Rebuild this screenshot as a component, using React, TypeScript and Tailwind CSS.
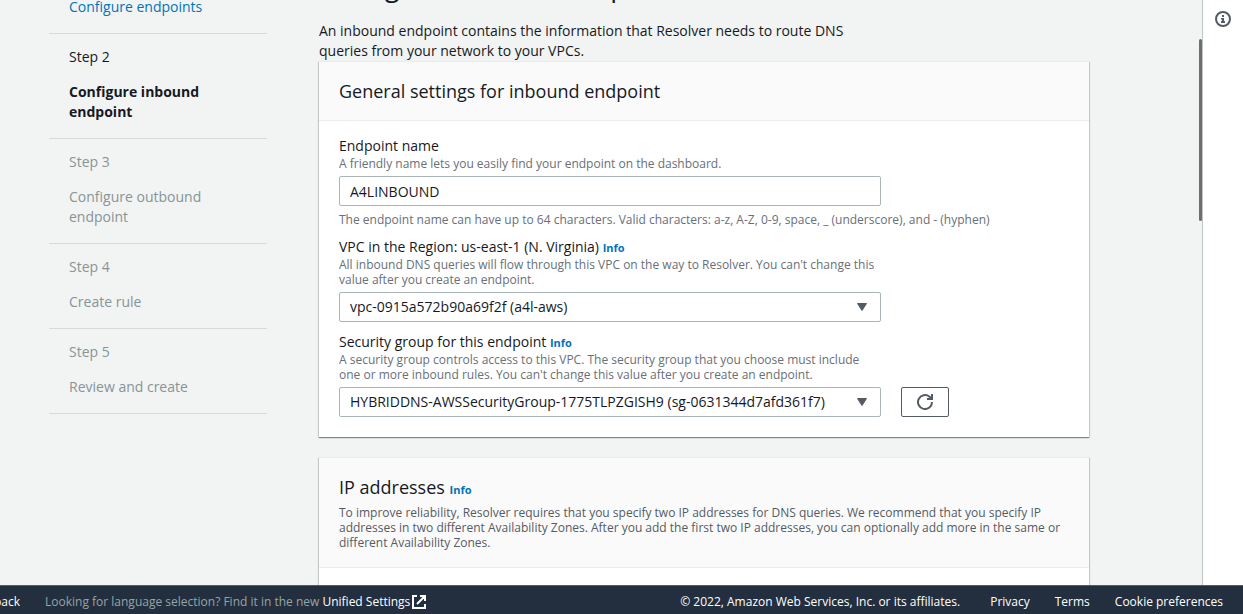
import type { ReactNode } from "react";

const steps = [
  { label: "Step 1", title: "Configure endpoints", state: "done" },
  { label: "Step 2", title: "Configure inbound endpoint", state: "current" },
  { label: "Step 3", title: "Configure outbound endpoint", state: "todo" },
  { label: "Step 4", title: "Create rule", state: "todo" },
  { label: "Step 5", title: "Review and create", state: "todo" },
];

function InfoLink() {
  return (
    <a href="#info" className="text-[11px] leading-none font-bold text-[#0073bb]">
      Info
    </a>
  );
}

function StepList() {
  return (
    <nav aria-label="Steps" className="-mt-[51px] w-[218px] shrink-0">
      <ol>
        {steps.map((s) => (
          <li
            key={s.label}
            className={`border-b border-[#d5dbdb] px-5 pt-[13px] pb-4 leading-5 ${
              s.state === "todo" ? "text-[#879596]" : "text-[#16191f]"
            }`}
          >
            <div className="mb-[15px]">{s.label}</div>
            {s.state === "done" ? (
              <a href="#step" className="text-[#0073bb]">
                {s.title}
              </a>
            ) : (
              <div className={s.state === "current" ? "font-bold" : ""}>{s.title}</div>
            )}
          </li>
        ))}
      </ol>
    </nav>
  );
}

function Card({ header, children }: { header: ReactNode; children?: ReactNode }) {
  return (
    <section className="border-t border-[#eaeded] bg-white shadow-[0_1px_1px_0_rgba(0,28,36,0.3),1px_1px_1px_0_rgba(0,28,36,0.15),-1px_1px_1px_0_rgba(0,28,36,0.15)]">
      <header className="border-b border-[#eaeded] bg-[#fafafa] px-5 py-[17px]">{header}</header>
      <div className="px-5 pt-[15px] pb-5">{children}</div>
    </section>
  );
}

function Select({ id, value }: { id: string; value: string }) {
  return (
    <div className="relative w-full max-w-[542px]">
      <select
        id={id}
        className="block h-[30px] w-full appearance-none rounded-xs border border-[#aab7b8] bg-white pr-8 pl-2.5 text-[14px] text-[#16191f]"
      >
        <option>{value}</option>
      </select>
      <svg className="pointer-events-none absolute top-[11px] right-[13px]" width="12" height="8" viewBox="0 0 12 8" aria-hidden="true">
        <path d="M1.500 .5h9L6 7.500z" fill="#545b64" stroke="#545b64" strokeLinejoin="round" />
      </svg>
    </div>
  );
}

export default function App() {
  return (
    <div className="flex h-screen flex-col overflow-hidden bg-[#f2f3f3] font-['Open_Sans',sans-serif] text-[14px] leading-5 text-[#16191f]">
      <div className="flex min-h-0 flex-1">
        <main className="relative flex min-w-0 flex-1 items-start overflow-hidden pr-[113px] pl-[49px]">
          <StepList />
          <div className="-mt-8 ml-[52px] min-w-0 flex-1">
            <h1 className="mb-[17px] text-[27px] leading-9">Configure inbound endpoint</h1>
            <p className="max-w-[540px]">
              An inbound endpoint contains the information that Resolver needs to route DNS queries from your network to
              your VPCs.
            </p>
            <div className="flex flex-col gap-5">
              <Card header={<h2 className="text-lg leading-6">General settings for inbound endpoint</h2>}>
                <div className="flex flex-col gap-2.5">
                  <div>
                    <label htmlFor="name" className="block">
                      Endpoint name
                    </label>
                    <p className="mb-[5px] text-[12px] leading-[15px] text-[#687078]">
                      A friendly name lets you easily find your endpoint on the dashboard.
                    </p>
                    <input
                      id="name"
                      defaultValue="A4LINBOUND"
                      className="block h-[30px] w-full max-w-[542px] rounded-xs border border-[#aab7b8] bg-white px-2.5 text-[14px]"
                    />
                    <p className="mt-1.5 text-[12px] leading-[15px] text-[#687078]">
                      The endpoint name can have up to 64 characters. Valid characters: a-z, A-Z, 0-9, space, _
                      (underscore), and - (hyphen)
                    </p>
                  </div>
                  <div>
                    <div>
                      <label htmlFor="vpc">VPC in the Region: us-east-1 (N. Virginia)</label> <InfoLink />
                    </div>
                    <p className="mb-[5px] max-w-[542px] text-[12px] leading-[15px] text-[#687078]">
                      All inbound DNS queries will flow through this VPC on the way to Resolver. You can't change this
                      value after you create an endpoint.
                    </p>
                    <Select id="vpc" value="vpc-0915a572b90a69f2f (a4l-aws)" />
                  </div>
                  <div>
                    <div>
                      <label htmlFor="sg">Security group for this endpoint</label> <InfoLink />
                    </div>
                    <p className="mb-[5px] max-w-[542px] text-[12px] leading-[15px] text-[#687078]">
                      A security group controls access to this VPC. The security group that you choose must include one
                      or more inbound rules. You can't change this value after you create an endpoint.
                    </p>
                    <div className="flex gap-5">
                      <Select id="sg" value="HYBRIDDNS-AWSSecurityGroup-1775TLPZGISH9 (sg-0631344d7afd361f7)" />
                      <button
                        type="button"
                        aria-label="Refresh"
                        className="flex h-[30px] w-12 shrink-0 items-center justify-center rounded-xs border border-[#545b64] bg-white"
                      >
                        <svg width="16" height="16" viewBox="0 0 16 16" fill="none" stroke="#545b64" strokeWidth="2" aria-hidden="true">
                          <path d="M15 8a7 7 0 1 1-2.500-5.300L14 4" />
                          <path d="M16 0v6h-6V4h2.500L14 2.500V0z" fill="#545b64" stroke="none" />
                        </svg>
                      </button>
                    </div>
                  </div>
                </div>
              </Card>
              <Card
                header={
                  <>
                    <h2 className="text-lg leading-6">
                      IP addresses <InfoLink />
                    </h2>
                    <p className="mt-1.5 text-[12px] leading-[15px] text-[#545b64]">
                      To improve reliability, Resolver requires that you specify two IP addresses for DNS queries. We
                      recommend that you specify IP addresses in two different Availability Zones. After you add the
                      first two IP addresses, you can optionally add more in the same or different Availability Zones.
                    </p>
                  </>
                }
              />
            </div>
          </div>
          <div className="absolute top-[39px] right-0 h-[182px] w-[3px] rounded-xs bg-[#6e6e6e]" />
        </main>
        <aside className="flex w-[41px] shrink-0 justify-center border-l border-[#bfc4c6] bg-white pt-[11px]">
          <button type="button" aria-label="Open help panel" className="size-4">
            <svg width="16" height="16" viewBox="0 0 16 16" fill="none" aria-hidden="true">
              <circle cx="8" cy="8" r="7" stroke="#545b64" strokeWidth="2" />
              <path d="M7 4h2v2H7zM6 7h3v3h1v2H6v-2h1V8.500H6z" fill="#545b64" />
            </svg>
          </button>
        </aside>
      </div>
      <footer className="flex h-[29px] shrink-0 items-center justify-between border-t border-[#545b64] bg-[#232f3e] pt-[3px] pr-5 text-[12px] whitespace-nowrap text-white">
        <div className="flex items-center">
          <div className="flex w-5 justify-end overflow-hidden">
            <button type="button">Feedback</button>
          </div>
          <p className="ml-[25px] text-[#95a5a6]">
            Looking for language selection? Find it in the new{" "}
            <a href="#settings" className="text-white">
              Unified Settings
            </a>
          </p>
          <svg className="ml-0.5" width="14" height="14" viewBox="0 0 14 14" fill="none" stroke="#fff" strokeWidth="2" aria-hidden="true">
            <path d="M5 1H1v12h12V9M8 1h5v5M13 1 5 9" />
          </svg>
        </div>
        <div className="flex">
          <span className="mr-[30px]">© 2022, Amazon Web Services, Inc. or its affiliates.</span>
          <a href="#privacy" className="mr-[25px]">
            Privacy
          </a>
          <a href="#terms" className="mr-[25px]">
            Terms
          </a>
          <button type="button">Cookie preferences</button>
        </div>
      </footer>
    </div>
  );
}
